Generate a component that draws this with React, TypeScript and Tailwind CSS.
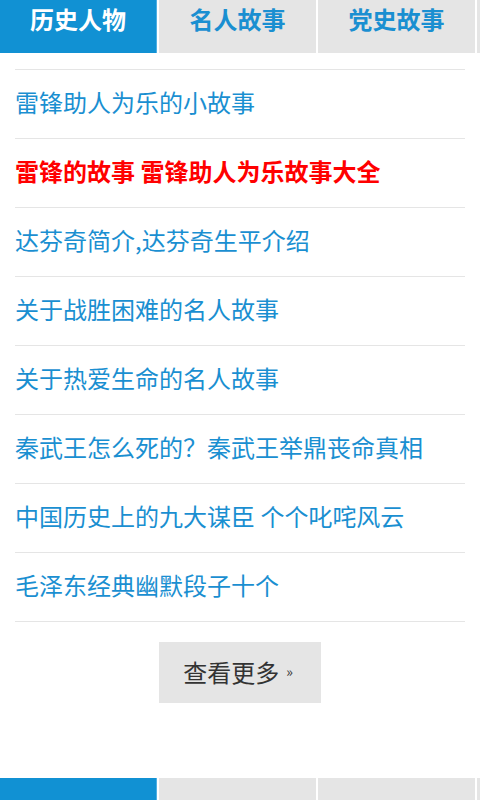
const tabs = ["历史人物", "名人故事", "党史故事", ""]

const stories = [
  { title: "雷锋助人为乐的小故事" },
  { title: "雷锋的故事 雷锋助人为乐故事大全", hot: true },
  { title: "达芬奇简介,达芬奇生平介绍" },
  { title: "关于战胜困难的名人故事" },
  { title: "关于热爱生命的名人故事" },
  { title: "秦武王怎么死的？秦武王举鼎丧命真相" },
  { title: "中国历史上的九大谋臣 个个叱咤风云" },
  { title: "毛泽东经典幽默段子十个" },
]

function TabBar({ showText = true }: { showText?: boolean }) {
  return (
    <div className="flex h-[53px] gap-[2px] overflow-hidden">
      {tabs.map((t, i) => (
        <div
          key={i}
          className={
            i === 0
              ? "w-[157px] shrink-0 border-r border-[#4fb0e4] bg-[#1191d3] text-center text-[24px] font-bold leading-[38px] text-white"
              : "w-[157px] shrink-0 bg-[#e5e5e5] text-center text-[24px] font-bold leading-[38px] text-[#1a8fd1]"
          }
        >
          {showText ? t : ""}
        </div>
      ))}
    </div>
  )
}

export default function App() {
  return (
    <div
      className="min-h-[800px] bg-white"
      style={{ fontFamily: '"Noto Sans CJK SC", "Noto Sans", sans-serif' }}
    >
      <TabBar />
      <ul className="mx-[15px] mt-4 border-t border-[#e5e5e5]">
        {stories.map((s) => (
          <li
            key={s.title}
            className={
              s.hot
                ? "flex h-[69px] items-center border-b border-[#e5e5e5] pb-[4px] text-[24px] font-bold text-[#ff0000]"
                : "flex h-[69px] items-center border-b border-[#e5e5e5] pb-[4px] text-[24px] text-[#1a8fd1]"
            }
          >
            {s.title}
          </li>
        ))}
      </ul>
      <div className="mt-[20px] flex justify-center">
        <button className="flex h-[61px] w-[162px] items-center justify-center gap-[7px] bg-[#e5e5e5] pb-[2px] pr-[4px] text-[24px] text-[#333333]">
          查看更多<span className="text-[14px]">»</span>
        </button>
      </div>
      <div className="mt-[75px]">
        <TabBar showText={false} />
      </div>
    </div>
  )
}
